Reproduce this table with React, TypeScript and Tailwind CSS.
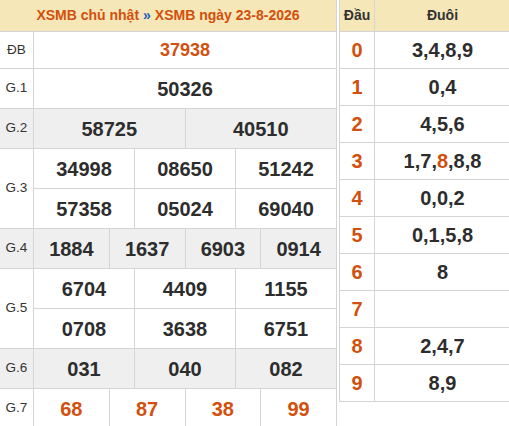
import React from "react";

type Prize = { label: string; rows: string[][]; gray?: boolean; red?: boolean; size?: string; h: string };

const prizes: Prize[] = [
	{ label: "ĐB", rows: [["37938"]], red: true, size: "text-[18px]", h: "h-[36px]" },
	{ label: "G.1", rows: [["50326"]], h: "h-[39px]" },
	{ label: "G.2", rows: [["58725", "40510"]], gray: true, h: "h-[39px]" },
	{ label: "G.3", rows: [["34998", "08650", "51242"], ["57358", "05024", "69040"]], h: "h-[39px]" },
	{ label: "G.4", rows: [["1884", "1637", "6903", "0914"]], gray: true, h: "h-[39px]" },
	{ label: "G.5", rows: [["6704", "4409", "1155"], ["0708", "3638", "6751"]], h: "h-[39px]" },
	{ label: "G.6", rows: [["031", "040", "082"]], gray: true, h: "h-[39px]" },
	{ label: "G.7", rows: [["68", "87", "38", "99"]], red: true, h: "h-[39px]" },
];

const loto: { head: string; tail: React.ReactNode }[] = [
	{ head: "0", tail: "3,4,8,9" },
	{ head: "1", tail: "0,4" },
	{ head: "2", tail: "4,5,6" },
	{ head: "3", tail: (<>1,7,<span className="text-[#d2500c]">8</span>,8,8</>) },
	{ head: "4", tail: "0,0,2" },
	{ head: "5", tail: "0,1,5,8" },
	{ head: "6", tail: "8" },
	{ head: "7", tail: "" },
	{ head: "8", tail: "2,4,7" },
	{ head: "9", tail: "8,9" },
];

const App: React.FC = () => {
	return (
		<div
			className="flex items-start gap-[2px] w-[509px] h-[426px] overflow-hidden bg-white text-[#333]"
			style={{ fontFamily: '"Liberation Sans", Arial, sans-serif' }}
		>
			<div className="w-[337px] shrink-0 border-r border-[#d4d4d4]">
				<div className="h-[32px] flex items-center justify-center bg-[#f6e7b8] border-b border-[#d4d4d4] text-[14px] font-bold text-[#d2500c]">
					XSMB chủ nhật <span className="text-[#2762b8] mx-[4px]">»</span> XSMB ngày 23-8-2026
				</div>
				{prizes.map((p) => (
					<div key={p.label} className={`flex border-b border-[#d4d4d4] ${p.gray ? "bg-[#efefef]" : "bg-white"}`}>
						<div className="w-[34px] shrink-0 flex items-center justify-center border-r border-[#d4d4d4] text-[13.5px]">
							{p.label}
						</div>
						<div className="flex-1 flex flex-col">
							{p.rows.map((row, ri) => (
								<div
									key={ri}
									className={`flex box-content ${p.h} ${ri < p.rows.length - 1 ? "border-b border-[#d4d4d4]" : ""}`}
								>
									{row.map((n, ci) => (
										<div
											key={ci}
											className={`flex-1 basis-0 flex items-center justify-center font-bold ${p.size ?? "text-[20px]"} ${
												p.red ? "text-[#d2500c]" : "text-[#2d2d2d]"
											} ${ci < row.length - 1 ? "border-r border-[#d4d4d4]" : ""}`}
										>
											{n}
										</div>
									))}
								</div>
							))}
						</div>
					</div>
				))}
			</div>
			<div className="w-[171px] shrink-0 border-l border-[#d4d4d4]">
				<div className="flex h-[32px] bg-[#f6e7b8] border-b border-[#d4d4d4] text-[14px] font-bold">
					<div className="w-[35px] flex items-center justify-center border-r border-[#d4d4d4]">Đầu</div>
					<div className="flex-1 flex items-center justify-center">Đuôi</div>
				</div>
				{loto.map((r) => (
					<div key={r.head} className="flex h-[37px] border-b border-[#d4d4d4] text-[20px] font-bold">
						<div className="w-[35px] flex items-center justify-center border-r border-[#d4d4d4] text-[#d2500c]">
							{r.head}
						</div>
						<div className="flex-1 flex items-center justify-center text-[#2d2d2d]">{r.tail}</div>
					</div>
				))}
			</div>
		</div>
	);
};

export default App;
